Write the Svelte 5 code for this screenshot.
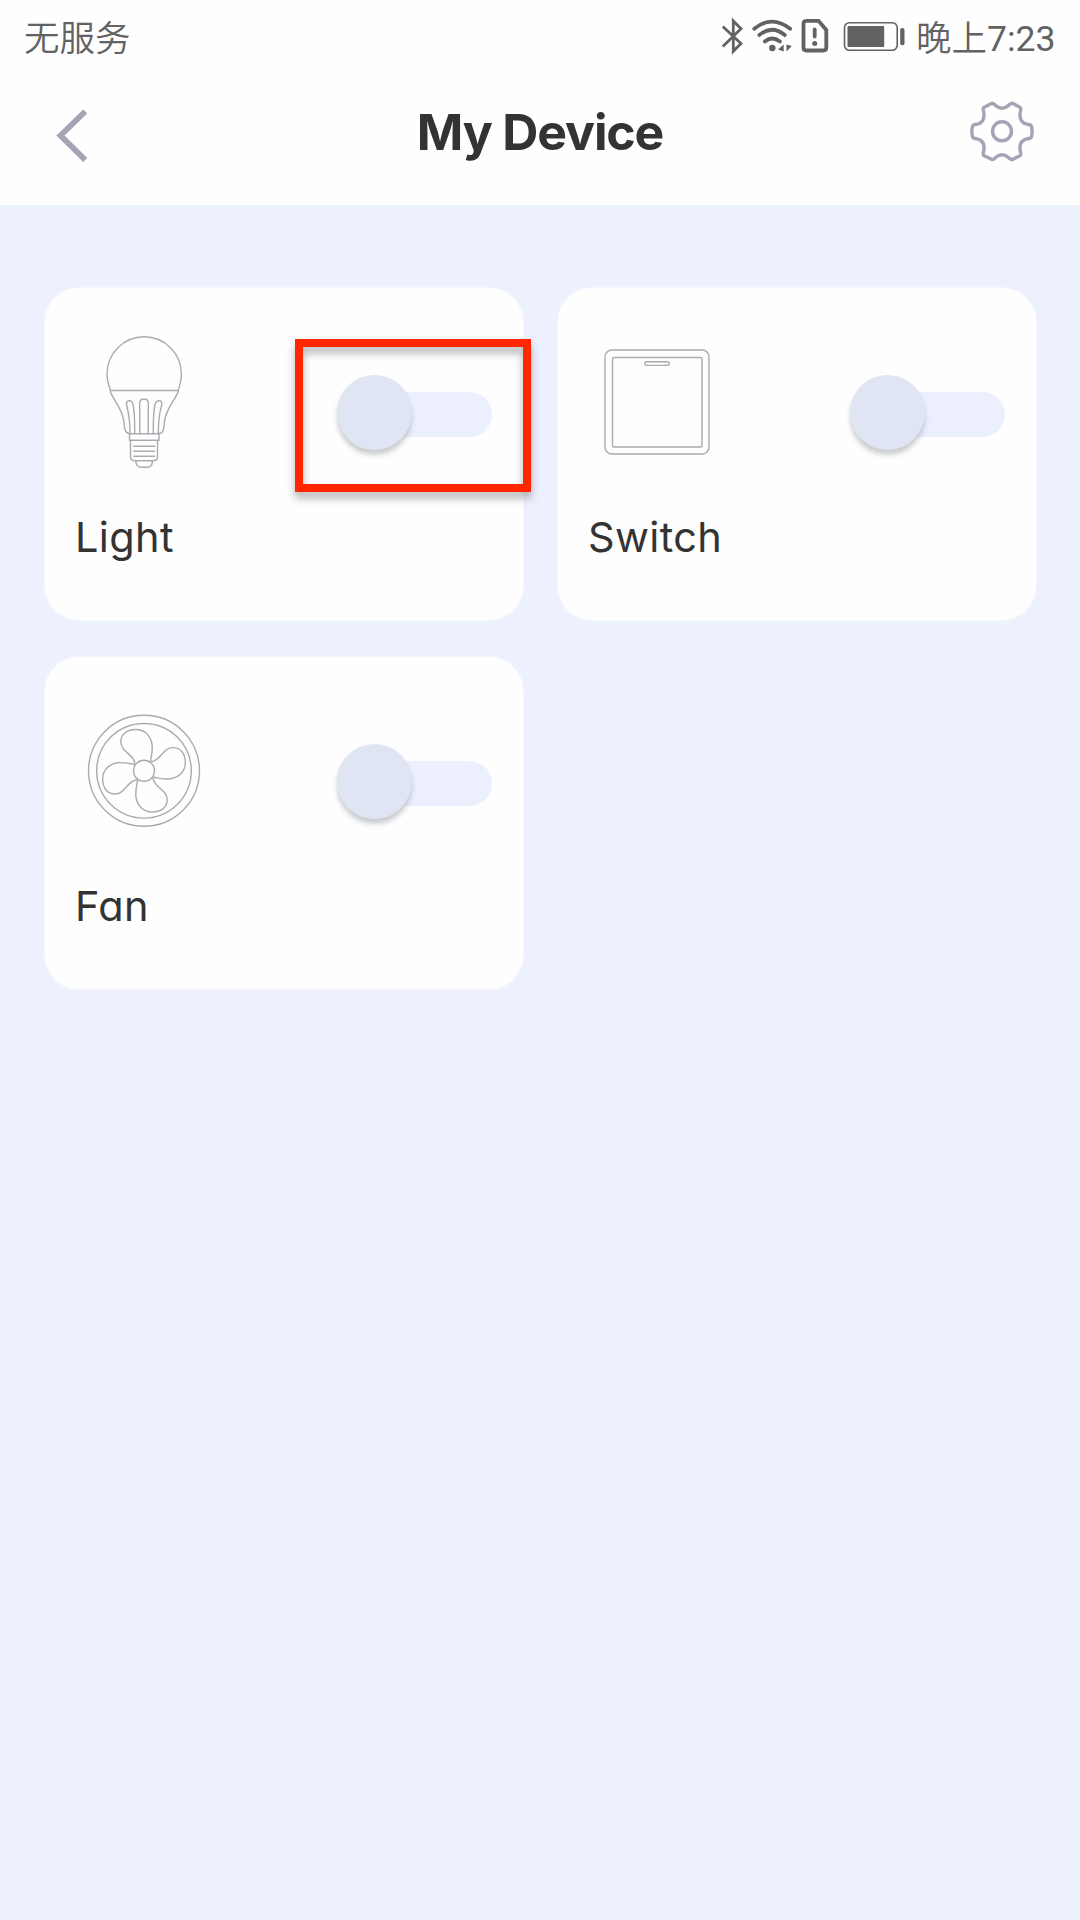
<script>
  const devices = $state([
    { name: 'Light', icon: 'bulb', on: false, highlighted: true },
    { name: 'Switch', icon: 'switch', on: false },
    { name: 'Fan', icon: 'fan', on: false }
  ]);
  const blades = [0, 90, 180, 270];
</script>

<main class="screen">
  <div class="top">
    <div class="status">
      <span class="carrier">无服务</span>
      <div class="indicators">
        <svg class="bt" viewBox="721 18 24 38" width="24" height="38">
          <path d="M722.8 26.5 741 43.5 733.3 51.3V21L741 28.8 722.8 46.5" />
        </svg>
        <svg class="wifi" viewBox="752 18 42 38" width="42" height="38">
          <path d="M754.2 28.8Q772 14.500 790.200 28.8M759.300 35Q772 24.500 784.800 35M764.800 41.5Q772 35.500 780 41.5" />
          <circle cx="772.3" cy="48" r="3.2" />
          <path class="solid" d="M783.700 44.500V51.500L778 49.500ZM786.500 44.500V51.500L791.800 46Z" />
        </svg>
        <svg class="sim" viewBox="801 18 28 38" width="28" height="38">
          <path d="M806 20.800H818.500L826.300 30V47.500Q826.300 50.500 823.300 50.500H806.500Q803.500 50.500 803.500 47.500V23.800Q803.500 20.800 806.500 20.800Z" />
          <path class="mark" d="M814.700 29.500V36.500" />
          <circle cx="814.700" cy="43.500" r="2.500" />
        </svg>
        <svg class="battery" viewBox="843 18 64 38" width="64" height="38">
          <rect class="shell" x="844.500" y="22.700" width="52.700" height="27.600" rx="5" />
          <rect x="847.500" y="26" width="36.700" height="21" rx="1" />
          <rect x="900.200" y="28" width="4.300" height="17.300" rx="2" />
        </svg>
        <span class="time"><span class="cjk">晚上</span>7:23</span>
      </div>
    </div>

    <header class="nav">
      <button class="icon-button" aria-label="Back">
        <svg class="back" viewBox="54 106 36 60" width="36" height="60">
          <path d="M85.200 111.500 60.500 135.500 85.200 160" />
        </svg>
      </button>
      <h1>My Device</h1>
      <button class="icon-button" aria-label="Settings">
        <svg class="gear" viewBox="968 98 68 66" width="68" height="66">
          <path d="M992 103.200Q993.500 103.200 996 105.800Q1002 110.500 1008 105.800Q1010.500 103.200 1012.500 103.200L1020.300 107.500Q1021.300 108.500 1020.300 112Q1018.500 122.500 1027 124.200Q1031 124.500 1031.500 126.500Q1032.800 131.500 1031.500 136.500Q1031 138.500 1027 138.800Q1018.500 140.500 1020.300 151Q1021.300 154.500 1020.300 155.500L1012.500 159.600Q1010.500 159.600 1008 157.200Q1002 152.500 996 157.200Q993.500 159.600 992 159.600L983.700 155.500Q982.700 154.500 983.700 151Q985.500 140.500 977 138.800Q973 138.500 972.500 136.500Q971.200 131.500 972.500 126.500Q973 124.500 977 124.200Q985.500 122.500 983.700 112Q982.700 108.500 983.700 107.500Z" />
          <circle cx="1002" cy="131.300" r="9.500" />
        </svg>
      </button>
    </header>
  </div>

  <section class="devices">
    {#each devices as device}
      <article class="card">
        <div class="controls">
          <svg class="device-icon" viewBox="34 44 130 140" width="130" height="140">
            {#if device.icon === 'bulb'}
              <path d="M65.500 102.500C63 96 62 91 62 86A37.200 37.200 0 0 1 136.400 86C136.400 91 135.400 96 133 102.500Z" />
              <path d="M65 102.500C66.500 110 78.500 121 79 135C79.500 141 80 145.500 85 145.700H113.500C118.500 145.500 119 141 119.300 135C120 121 132 110 133.500 102.500" />
              <path d="M85 145.700C85 131 83.500 124 81.500 116.500C81 111.500 87 111.500 88 116.500C90 126 89.700 134 89.700 145.700M94.700 145.700V115.500Q94.700 111 99 111T103.300 115.500V145.700M108.300 145.700C108.300 134 108 126 110 116.500C111.500 111.500 117.500 111.500 116.800 116.500C114.500 124 113.300 131 113.300 145.700" />
              <path d="M84.500 145.700V152.300H114V145.700M85.500 152.300V168.500Q85.500 172.700 89.500 172.700H108.500Q112.500 172.700 112.500 168.500V152.300M88.300 158.300H110.200M88.300 163.300H110.200M88.300 168.300H110.200M90.800 172.700Q90.800 179.300 97 179.300H102Q107.500 179.300 107.500 172.700" />
            {:else if device.icon === 'switch'}
              <rect x="47" y="62" width="104" height="104" rx="7" />
              <rect x="54.500" y="69.500" width="89.500" height="89.500" rx="1.500" />
              <rect x="86.800" y="73.800" width="24.500" height="3.600" rx="1.800" />
            {:else}
              <circle cx="99" cy="113.800" r="55.500" />
              <circle cx="99" cy="113.800" r="47.300" />
              <circle cx="99" cy="113.800" r="10.500" />
              {#each blades as angle}
                <path transform="rotate({angle} 99 113.800)" d="M90 106.500C89 97 75.500 95 75.800 84.500C76 77 82 72.500 91 72.500C100 72.500 105.500 79 107 87C108 94 106 99 105.500 105" />
              {/each}
            {/if}
          </svg>
          <button
            class="toggle"
            class:on={device.on}
            role="switch"
            aria-checked={device.on}
            aria-label={device.name}
            onclick={() => (device.on = !device.on)}
          ><span class="track"></span><span class="thumb"></span></button>
        </div>
        <h2>{device.name}</h2>
        {#if device.highlighted}<div class="highlight"></div>{/if}
      </article>
    {/each}
  </section>
</main>

<style>
  :global(body) {
    background: #edf1fe;
  }
  * {
    box-sizing: border-box;
  }
  svg {
    display: block;
    fill: none;
    overflow: visible;
  }
  button {
    border: 0;
    padding: 0;
    background: none;
  }
  .screen {
    min-height: 1920px;
    background: #edf1fe;
    font-family: Inter, "Noto Sans CJK SC", sans-serif;
    font-feature-settings: "cv11";
  }
  .top {
    height: 205px;
    background: #fefefe;
    box-shadow: 0 0 3px #edf1fe;
  }
  .status {
    display: flex;
    justify-content: space-between;
    height: 74px;
    padding: 0 24px;
    color: #626262;
    font: 35.500px/72px Roboto, "Noto Sans CJK SC", sans-serif;
    white-space: nowrap;
  }
  .carrier,
  .cjk {
    font-family: "Noto Sans CJK SC", sans-serif;
    font-weight: 350;
  }
  .indicators {
    display: flex;
    width: 335px;
  }
  .indicators svg {
    flex: none;
    margin-top: 18px;
    stroke: #626262;
  }
  .bt {
    stroke-width: 2.800;
  }
  .wifi {
    margin-left: 7px;
    stroke-width: 3.700;
    stroke-linecap: round;
  }
  .wifi circle,
  .wifi .solid,
  .sim circle {
    fill: #626262;
    stroke: none;
  }
  .sim {
    margin-left: 7px;
    stroke-width: 3.800;
  }
  .sim .mark {
    stroke-linecap: round;
  }
  .battery {
    margin-left: 14px;
  }
  .battery rect {
    fill: #626262;
    stroke: none;
  }
  .battery .shell {
    fill: none;
    stroke: #626262;
    stroke-width: 1.600;
  }
  .time {
    margin-left: 9px;
  }
  .nav {
    display: grid;
    grid-template-columns: 68px 1fr 68px;
    align-items: start;
    padding: 24px 44px 0 54px;
  }
  .icon-button svg {
    stroke: #a3a5b5;
  }
  .back {
    margin-top: 8px;
    stroke-width: 5.800;
  }
  .gear {
    stroke-width: 3.400;
    stroke-linejoin: round;
  }
  h1 {
    margin: 4px 10px 0 0;
    color: #333;
    font-size: 50px;
    font-weight: 650;
    line-height: 60px;
    letter-spacing: -1.150px;
    text-align: center;
  }
  .devices {
    display: grid;
    grid-template-columns: 478px 478px;
    gap: 37px 35px;
    padding: 83px 45px 0;
  }
  .card {
    position: relative;
    height: 332px;
    padding: 44px 31px 0 34px;
    border-radius: 34px;
    background: #fefefe;
    box-shadow: 0 0 3px #fefefe;
  }
  .controls {
    display: flex;
    justify-content: space-between;
  }
  .device-icon {
    stroke: #a9abb1;
    stroke-width: 1.400;
  }
  .toggle {
    display: grid;
    align-items: center;
    width: 155px;
    height: 76px;
    margin-top: 42px;
  }
  .track,
  .thumb {
    grid-area: 1 / 1;
  }
  .track {
    height: 45px;
    margin: 4px 0 0 30px;
    border-radius: 23px;
    background: #ecf0fe;
  }
  .thumb {
    width: 75px;
    height: 75px;
    border-radius: 50%;
    background: #dfe5f2;
    box-shadow: 0 5px 5px rgb(70 80 90 / 0.280);
  }
  .on .thumb {
    justify-self: end;
  }
  h2 {
    margin: 39px 0 0 -4px;
    color: #333;
    font-size: 41.500px;
    font-weight: 380;
    line-height: 52px;
    letter-spacing: 0.350px;
  }
  .highlight {
    position: absolute;
    top: 51px;
    left: 250px;
    width: 236px;
    height: 153px;
    border: 8px solid #ff2600;
    filter: drop-shadow(0 6px 4px rgb(0 0 0 / 0.300));
    pointer-events: none;
    z-index: 1;
  }
</style>
